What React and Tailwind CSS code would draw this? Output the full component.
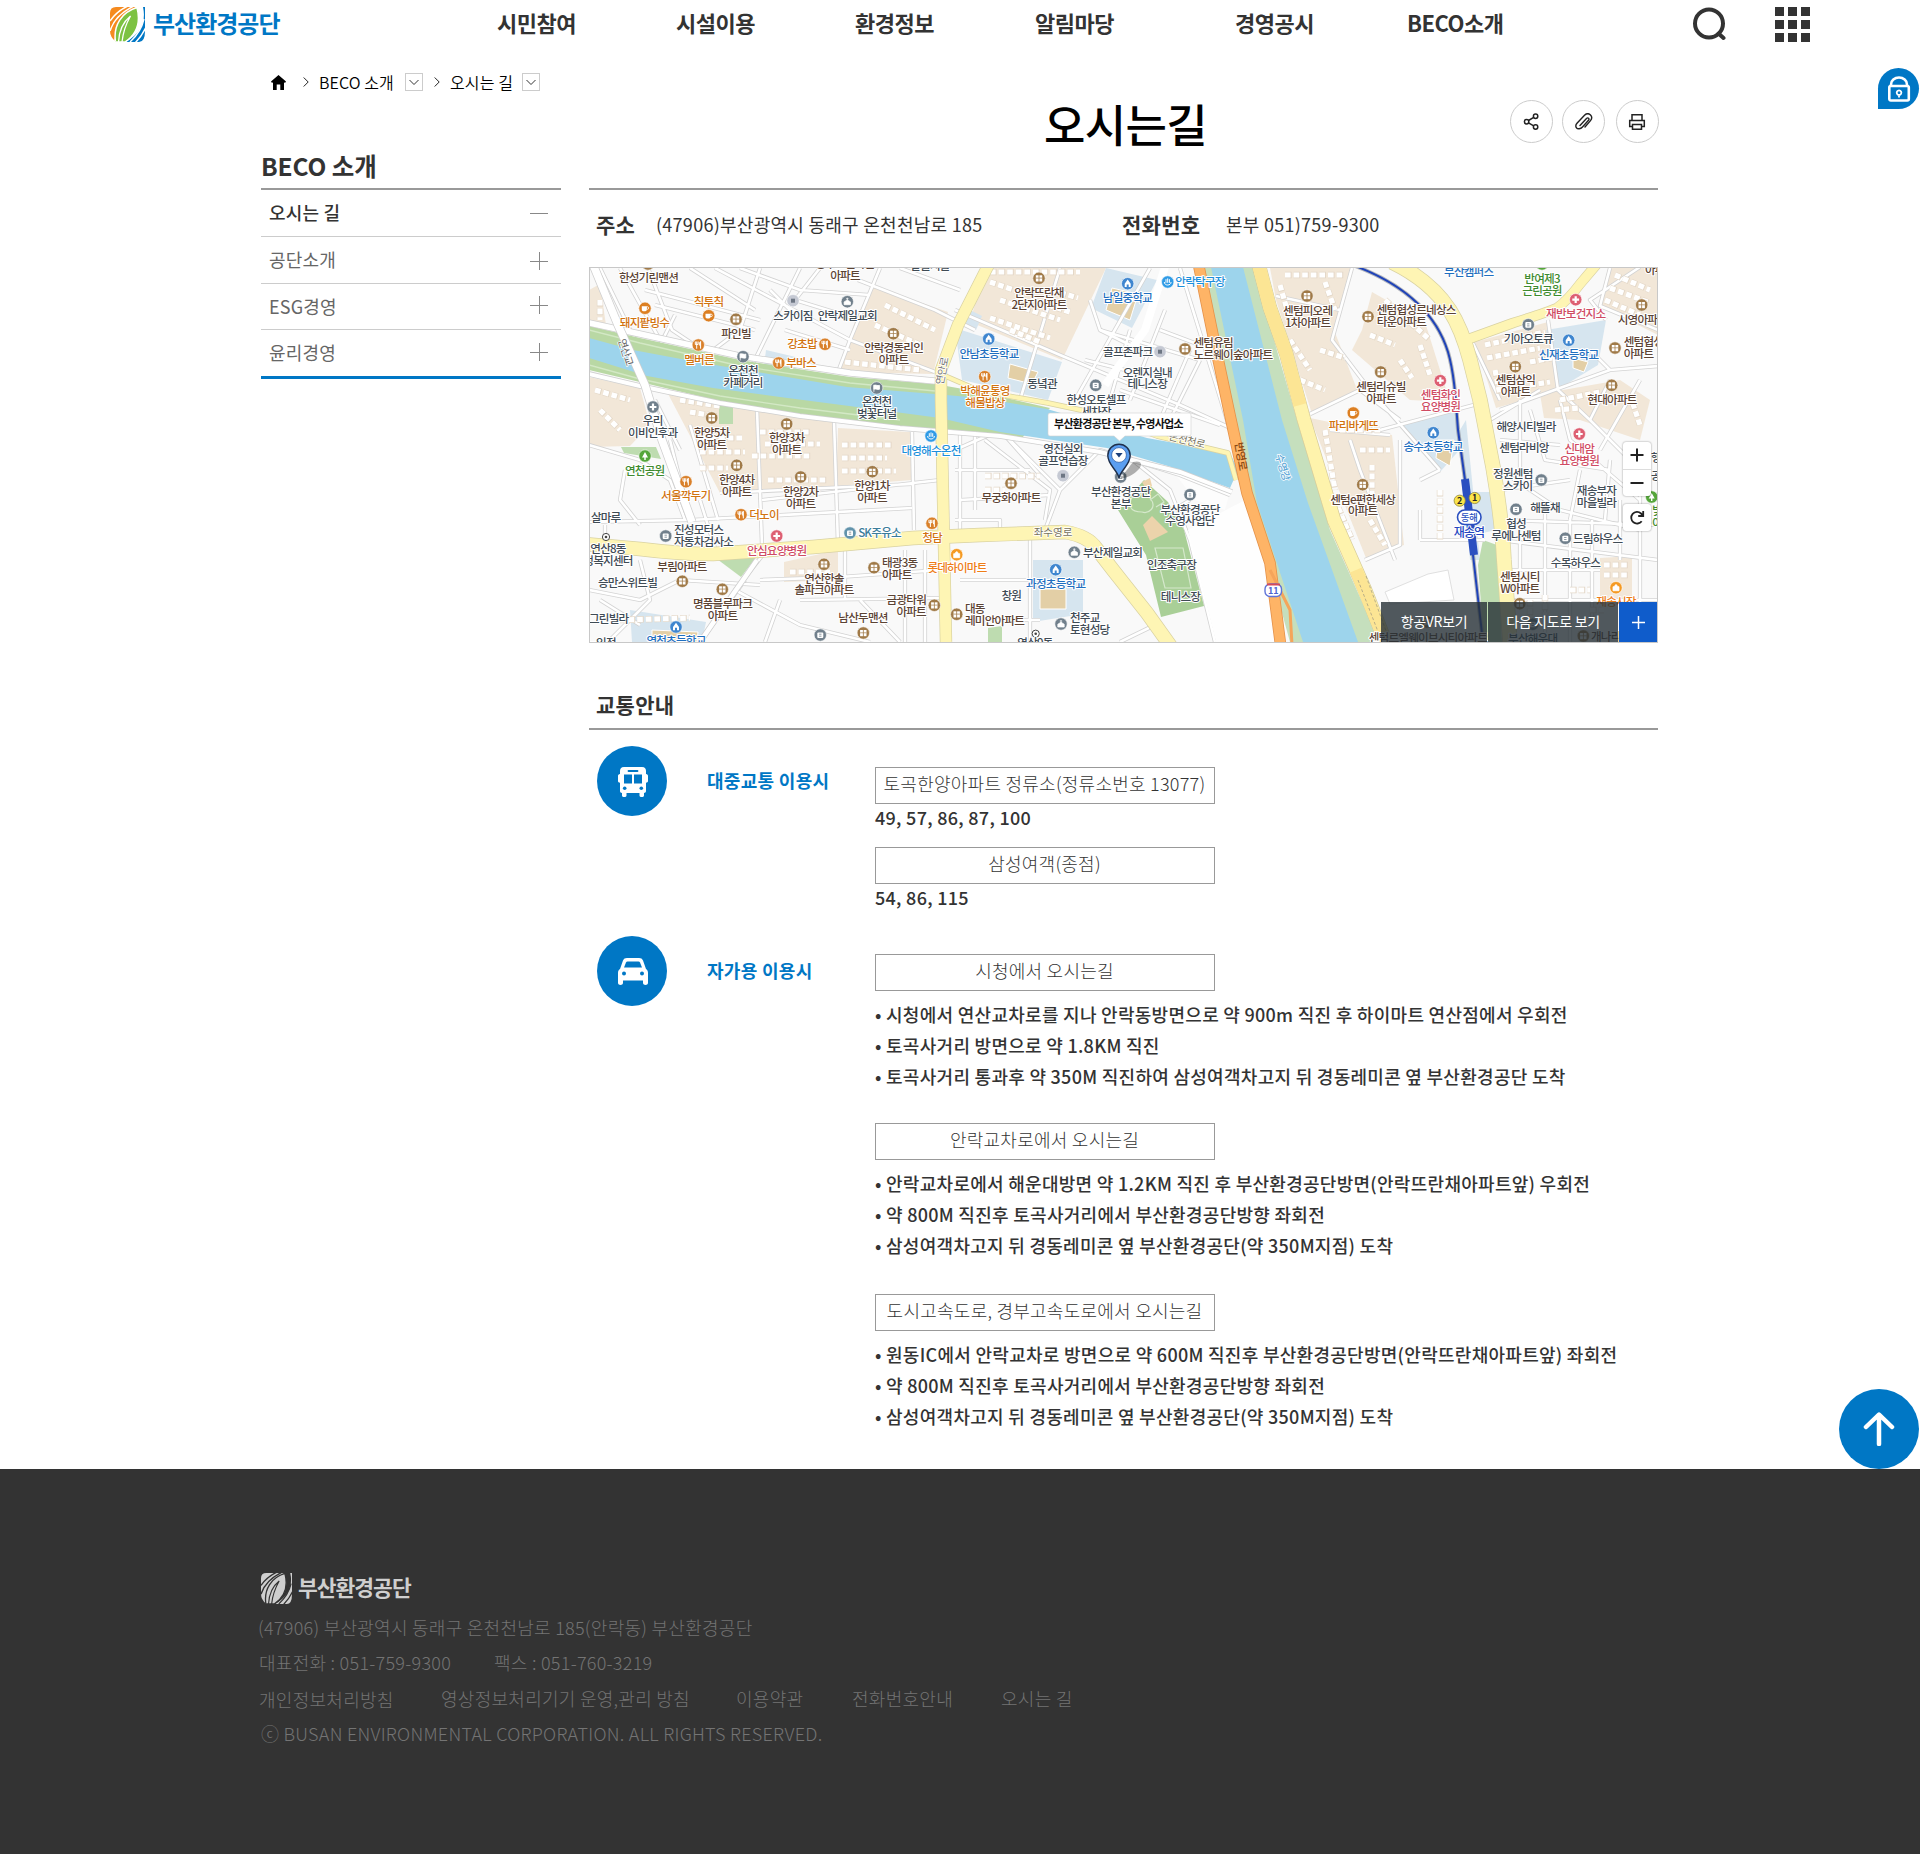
import React from "react";

const BASE = "font-['Noto_Sans_CJK_KR','Noto_Sans',sans-serif]";

/* ---------- map data ---------- */
const C = {
  apt: "#5b4334",
  gray: "#3f4b55",
  food: "#d2730f",
  school: "#1f6fc0",
  sky: "#1c8fdb",
  red: "#cf4b63",
  green: "#3d8a2e",
  teal: "#3c7d9b",
  sale: "#ee7d17",
};
const ICON = {
  apt: "#a07a48",
  gray: "#71808c",
  dot: "#c5c9d3",
  food: "#d9802a",
  cafe: "#dc7f22",
  school: "#3f86cf",
  sky: "#2f9be6",
  red: "#dd5f72",
  green: "#55a63a",
  teal: "#6293ab",
  sale: "#f59a23",
  flag: "#71808c",
  cross: "#71808c",
  church: "#71808c",
};

// [lines, x, y of first line centre, colour, anchor]
const LABELS = [
  [["한성기린맨션"], 648.5, 277.7, C.apt],
  [["돼지팥빙수"], 644.5, 323, C.food],
  [["칙투칙"], 708.5, 301.7, C.food],
  [["파인빌"], 736, 333.5, C.apt],
  [["멜버른"], 699, 360, C.food],
  [["온천천", "카페거리"], 743, 371, C.gray],
  [["강초밥"], 802, 344, C.food],
  [["부바스"], 801, 362.5, C.food],
  [["스카이짐"], 793, 315.3, C.gray],
  [["안락제일교회"], 847.3, 316, C.gray],
  [["동부그린타운", "아파트"], 845, 263.5, C.apt],
  [["알뜰시몰"], 930, 266, C.gray],
  [["안락경동리인", "아파트"], 893.5, 348, C.apt],
  [["온천천", "벚꽃터널"], 876.7, 402, C.gray],
  [["우리", "이비인후과"], 652.7, 421, C.gray],
  [["한양5차", "아파트"], 711.7, 432.7, C.apt],
  [["한양3차", "아파트"], 786.7, 438, C.apt],
  [["대영해수온천"], 931, 450.7, C.sky],
  [["연천공원"], 644.7, 470.3, C.green],
  [["서울깍두기"], 685.7, 496, C.food],
  [["한양4차", "아파트"], 736.7, 480, C.apt],
  [["한양2차", "아파트"], 800.7, 491.5, C.apt],
  [["한양1차", "아파트"], 872, 485.7, C.apt],
  [["더노이"], 764, 514.7, C.food],
  [["살마루"], 605.7, 518, C.gray],
  [["진성모터스", "자동차검사소"], 674, 529.5, C.gray, "start"],
  [["안심요양병원"], 776.7, 550.3, C.red],
  [["SK주유소"], 879.5, 532.7, C.teal],
  [["청담"], 932, 537.3, C.food],
  [["연산8동", "정복지센터"], 608, 548.5, C.gray],
  [["부림아파트"], 682, 567, C.apt],
  [["승만스위트빌"], 627.5, 582.7, C.gray],
  [["명품블루파크", "아파트"], 722.5, 603.7, C.apt],
  [["그린빌라"], 608.7, 618.7, C.gray],
  [["연천초등학교"], 676, 640.7, C.school],
  [["노인정"], 601, 643, C.gray],
  [["연산한솔", "솔파크아파트"], 824, 578.3, C.apt],
  [["태광3동", "아파트"], 882, 562.5, C.apt, "start"],
  [["롯데하이마트"], 957, 568, C.sale],
  [["금광타워", "아파트"], 926, 599.7, C.apt, "end"],
  [["대동", "레미안아파트"], 965, 609, C.apt, "start"],
  [["남산두맨션"], 863, 618, C.apt],
  [["안락뜨란채", "2단지아파트"], 1039, 292.7, C.apt],
  [["남일중학교"], 1127.5, 298, C.school],
  [["안락탁구장"], 1200, 281.7, C.sky],
  [["안남초등학교"], 989, 353.3, C.school],
  [["박해윤통영", "해물밥상"], 985, 390.5, C.food],
  [["골프존파크"], 1127.7, 351.7, C.gray],
  [["센텀유림", "노르웨이숲아파트"], 1193.5, 342.7, C.apt, "start"],
  [["오렌지실내", "테니스장"], 1147.3, 372.3, C.gray],
  [["동녘관"], 1042, 383.7, C.gray],
  [["한성오토셀프", "세차장"], 1096, 400, C.gray],
  [["센텀피오레", "1차아파트"], 1307.7, 310.5, C.apt],
  [["부산캠퍼스"], 1468.7, 272, C.school],
  [["센텀협성르네상스", "타운아파트"], 1376.7, 310, C.apt, "start"],
  [["센텀리슈빌", "아파트"], 1381, 386.5, C.apt],
  [["센텀화인", "요양병원"], 1440.5, 394.7, C.red],
  [["파리바게뜨"], 1353.5, 426, C.food],
  [["송수초등학교"], 1433, 446.7, C.school],
  [["반여제3", "근린공원"], 1542, 278.7, C.green],
  [["재반보건지소"], 1575.7, 314, C.red],
  [["기아오토큐"], 1528.3, 339, C.gray],
  [["신재초등학교"], 1568.7, 355, C.school],
  [["시영아파트"], 1617.7, 319.7, C.apt, "start"],
  [["아파트"], 1645, 270, C.apt, "start"],
  [["센텀협성", "아파트"], 1623.7, 342, C.apt, "start"],
  [["센텀삼익", "아파트"], 1515.5, 379.7, C.apt],
  [["현대아파트"], 1612, 399.3, C.apt],
  [["해양시티빌라"], 1526, 426.3, C.gray],
  [["센텀라비앙"], 1524, 447.7, C.gray],
  [["신대암", "요양병원"], 1579.3, 448.7, C.red],
  [["정원센텀", "스카이"], 1532.5, 473.5, C.gray, "end"],
  [["센텀e편한세상", "아파트"], 1362.7, 499.2, C.apt],
  [["재송부자", "마을빌라"], 1596.5, 491, C.gray],
  [["해뜰채"], 1545, 507.7, C.gray],
  [["협성", "루에나센텀"], 1516, 523.5, C.gray],
  [["드림하우스"], 1597.7, 538.5, C.gray],
  [["수목하우스"], 1575.5, 563, C.gray],
  [["센텀시티", "W아파트"], 1519.8, 577, C.apt],
  [["재송시장"], 1616, 601.5, C.sale],
  [["센텀르엘웨이브시티아파트"], 1368.7, 637.3, C.apt, "start"],
  [["부산해운대"], 1532.7, 638.3, C.gray],
  [["개나리"], 1591, 636.7, C.apt, "start"],
  [["행"], 1651, 457.5, C.gray, "start"],
  [["공"], 1651, 475.5, C.gray, "start"],
  [["빛", "이"], 1652, 511, C.green, "start"],
  [["영진실외", "골프연습장"], 1063, 448.7, C.gray],
  [["무궁화아파트"], 1011, 497.3, C.apt],
  [["부산환경공단", "본부"], 1120.7, 491.7, C.gray],
  [["부산환경공단", "수영사업단"], 1190, 509.3, C.gray],
  [["부산제일교회"], 1083, 552.3, C.gray, "start"],
  [["과정초등학교"], 1055.7, 583.7, C.school],
  [["창원"], 1011.3, 595.7, C.gray],
  [["인조축구장"], 1171.5, 564.3, C.gray],
  [["테니스장"], 1180.5, 596.3, C.gray],
  [["천주교", "토현성당"], 1070, 617.8, C.gray, "start"],
  [["연산9동"], 1035, 643, C.gray],
];

const PINS = [
  ["apt", 648, 264], ["cafe", 645, 308.3], ["cafe", 708.7, 315.7], ["apt", 736, 319.3],
  ["food", 698.3, 345], ["flag", 743, 356.7], ["food", 825, 344.3], ["food", 778.7, 363],
  ["dot", 793, 300.7], ["church", 847.3, 301.7], ["apt", 893.3, 333.7], ["flag", 876.7, 388],
  ["cross", 653, 407], ["apt", 711.7, 418], ["apt", 786.7, 424], ["sky", 931, 436],
  ["green", 645, 456], ["food", 686, 481.7], ["apt", 736.7, 465.3], ["apt", 800.7, 477],
  ["apt", 872.3, 471.7], ["food", 741, 514.7], ["gray", 665.7, 536], ["red", 776.7, 536],
  ["teal", 850, 533], ["food", 932, 523.3], ["apt", 682.3, 581.3], ["apt", 722.3, 589.3],
  ["school", 676, 627], ["apt", 824, 564.3], ["apt", 874, 567.7], ["sale", 956.7, 554.7],
  ["apt", 934.3, 605.3], ["apt", 956.7, 614.3], ["apt", 863.3, 633], ["gray", 820.3, 635],
  ["apt", 1039, 278.3], ["school", 1127.7, 283.7], ["sky", 1167.7, 282], ["school", 988.7, 339],
  ["food", 984.7, 376.7], ["dot", 1160, 351.7], ["apt", 1185, 349], ["gray", 1095.7, 385.3],
  ["apt", 1307, 296], ["apt", 1368, 316.7], ["apt", 1380.7, 372], ["red", 1440.3, 380.7],
  ["cafe", 1353.3, 413], ["school", 1433.3, 432.7], ["green", 1542, 264], ["red", 1575.7, 299.7],
  ["gray", 1528.3, 324.7], ["school", 1568.7, 340.3], ["apt", 1641.7, 305], ["apt", 1615, 348],
  ["apt", 1515.3, 366.7], ["apt", 1611.7, 385.3], ["red", 1579.3, 434], ["gray", 1541.3, 480],
  ["apt", 1362.7, 484.7], ["gray", 1516, 509.3], ["gray", 1565.3, 538.3], ["apt", 1519.7, 603.7],
  ["sale", 1616, 587.7], ["gray", 1532.7, 624.3], ["apt", 1583.3, 636], ["green", 1651.7, 497],
  ["apt", 1427, 622], ["dot", 1063, 475.7], ["apt", 1011, 483.3], ["gray", 1120.7, 477],
  ["gray", 1190, 494.7], ["church", 1074.3, 552.3], ["school", 1055.7, 569.7], ["church", 1061, 624],
];

const BEIGE = [
  "M589 377 640 388 650 425 630 446 589 447Z",
  "M589 290 600 284 606 325 589 330Z",
  "M666 390 700 396 785 410 834 420 836 488 720 493 Z",
  "M838 428 910 432 912 480 836 486Z",
  "M873 286 948 312 933 374 838 372 856 318Z",
  "M985 268 1106 268 1062 360 970 322Z",
  "M1270 268 1352 268 1334 330 1358 392 1312 414 1276 300Z",
  "M1372 292 1425 322 1450 402 1410 400 1352 350 1362 330Z",
  "M1475 342 1548 322 1560 390 1496 408Z",
  "M1608 268 1658 268 1658 335 1600 306Z",
  "M1310 418 1392 435 1404 545 1366 558Z",
  "M1540 394 1620 380 1650 400 1640 440 1580 420 1544 418Z",
  "M1600 558 1632 556 1632 600 1600 600Z",
  "M784 562 838 550 838 580 784 582Z",
];
const SCHOOL = [
  "M1106 268 1157 280 1132 328 1091 308Z",
  "M955 328 1062 362 1048 400 962 380Z",
  "M1400 424 1457 410 1463 446 1440 472Z",
  "M1546 330 1606 320 1598 365 1560 388Z",
  "M630 610 706 622 702 642 632 642Z",
  "M1033 560 1083 560 1083 614 1033 622Z",
  "M766 350 800 358 796 370 764 366Z",
  "M970 310 982 316 976 330 962 326Z",
  "M1474 492 1494 492 1496 530 1474 535Z",
  "M1466 420 1472 480 1480 560 1470 560 1460 430Z",
];
const GREEN = [
  "M621 447 656 447 661 459 624 453Z",
  "M713 556 757 556 741 577Z",
  "M1483 540 1497 545 1502 642 1484 642 1478 565Z",
  "M988 628 1002 626 1002 642 988 642Z",
  "M719 405 733 405 733 424 719 424Z",
];
const SANDS = [
  "M1112 288 1138 294 1130 320 1106 310Z",
  "M1010 364 1038 372 1032 384 1008 378Z",
  "M1438 440 1454 440 1450 466 1436 458Z",
  "M1573 358 1588 362 1584 372 1573 368Z",
  "M652 630 698 632 697 642 652 640Z",
  "M1040 589 1066 589 1066 609 1040 609Z",
];
// rows of small buildings
const ROWS = [
  "M702 438h40M700 452h45M700 468h28M760 432h50M765 444h55M768 480h60M842 445h50M842 458h45M842 471h54M752 456h60",
  "M885 305 935 330M868 345h18M845 362 920 370M875 325 920 345M680 400 720 406M690 412 715 416",
  "M990 272h90M990 282 1020 292M1000 300 1060 320M990 318 1050 338M1010 330 1040 342M1052 290 1078 298M1048 305 1070 312",
  "M1285 275h60M1280 285 1290 320M1325 282 1335 310M1290 340 1310 370M1320 350 1345 358M1300 380 1325 390",
  "M1385 300 1430 340M1370 335 1395 345M1420 345 1430 375M1400 360 1412 378",
  "M1485 345 1545 332M1487 358 1540 348M1495 370 1500 395M1530 362 1552 358M1530 385 1550 382",
  "M1615 275 1650 290M1610 288 1650 303M1605 300 1640 315M1560 400 1600 392M1555 410 1580 408M1630 395 1640 425",
  "M1325 430 1335 490M1340 430h40M1360 450h30M1372 465v45M1335 500 1352 540M1370 520 1385 545",
  "M600 300v20M595 390 630 400M600 410 620 430M985 476h55M985 490h20M790 572h40M1604 565h24M1604 575h24",
  "M1530 600v20M1545 595v20M1570 590h20M1590 610h14M1440 490v50M620 620 690 618",
];
// narrow streets
const STREETS = [
  "M620 268 660 340M648 268 672 330 705 352M645 290 760 320M655 305 755 330M690 268 755 310M760 268 740 330 700 360",
  "M715 268 850 340 935 372M800 268 745 380M880 268 850 340 838 372M858 280 935 310 975 330M770 290 800 320M785 330 850 350",
  "M820 268 795 300 860 320M900 268 960 290M740 268 800 290 870 295M675 315 660 345M600 268 640 350",
  "M589 445 640 460 670 480 685 520M670 440 690 520M690 425 718 520M655 400 680 450M757 410 762 545M834 420 838 545M912 432 914 530",
  "M589 522 690 520 912 508M762 500 940 480M720 493 912 484M625 470 620 500 640 525M605 525v20M700 500 715 548",
  "M589 590 640 600 680 580 760 585M745 580 700 642M762 556 735 590 800 625 870 642M760 580 840 577 940 570M845 545V600M800 600 940 598",
  "M640 560 650 600 610 640M600 600 640 625M780 600 765 642M905 550V642M925 550V642M860 600 900 642M960 580h70M980 620h60M1030 540V642",
  "M955 310 1060 355 1180 405 1235 430M1060 268 1020 400M1140 350 1100 330 1090 300M1150 268 1075 400M1180 268 1230 430M1160 330 1200 345M1130 330 1110 400",
  "M1165 310 1130 400M1190 350 1160 420M1085 360 1125 370M1120 390 1220 425M1200 360 1170 420M1100 330 1200 360",
  "M955 450 1000 430 1060 490 1100 450 1180 475 1230 495M985 440 1050 490 1045 520M960 500 1050 495M1060 490 1045 530M1120 450 1170 490 1190 540 1215 642M955 520H1000V535M955 470H1030",
  "M960 420V530M975 430V510M1000 430 1040 475M1155 625 1120 642M1140 530 1190 500",
  "M1352 268 1332 340 1370 390 1440 470M1310 414 1360 390 1400 420M1276 296 1340 310M1380 430 1485 402M1350 440 1360 470 1395 560M1365 560 1400 545V440M1390 435 1330 430",
  "M1500 410 1560 388 1610 370 1658 366M1490 420 1540 390M1470 337 1500 400M1548 320 1558 390 1590 420 1640 470M1606 320 1590 300 1640 267M1610 370 1590 350M1658 330 1600 306 1610 268",
  "M1520 400V470M1530 410 1545 460 1610 470M1500 440 1560 445M1560 400 1570 440 1640 500M1500 470 1560 510 1640 530M1590 420 1610 380M1640 380 1600 450",
  "M1545 510V642M1500 520 1658 525M1500 540 1658 560M1500 570H1600M1570 520V642M1592 520V620M1620 500V560M1640 480V640M1505 600 1658 600M1520 540V570",
  "M1420 540h65M1420 510v30M1440 470 1420 480M1500 490 1570 480M1580 470 1570 520M1610 460 1605 520",
];
const YELLOW = [
  ["M990 262 958 325 941 370 941 400 946 642", 11],
  ["M585 544 640 549Q680 554 713 554L813 547 913 538 980 535 1065 532Q1088 536 1096 548L1113 570 1147 613 1172 648", 13],
  ["M1392 262C1450 290 1462 330 1470 360L1480 400 1493 467Q1502 520 1504 560L1510 642", 14],
  ["M1466 340 1513 323Q1548 312 1557 308 1568 300 1580 284L1597 264", 9],
  ["M943 375 980 391 1048 403 1090 412 1157 436 1228 453 1236 480", 4],
];

function PinGlyph({ kind }) {
  switch (kind) {
    case "apt":
      return (
        <g fill="#fff">
          <rect x="-3.2" y="-3" width="2.8" height="6.2" />
          <rect x="0.4" y="-3" width="2.8" height="6.2" />
          <path d="M-3.2 -.2h6.4" stroke="#a07a48" strokeWidth=".7" />
        </g>
      );
    case "food":
      return (
        <g stroke="#fff" strokeWidth="1" fill="none">
          <path d="M-3 -3.5v3M-1.6 -3.5v7.2M-.2 -3.5v3M-3 -.6h2.8" />
          <path d="M2.3 3.7v-7.2c-1.2.8-1.4 3-.6 4.2" fill="#fff" />
        </g>
      );
    case "cafe":
      return (
        <g>
          <path d="M-3.2 -2h5v3.4c0 2-5 2-5 0z" fill="#fff" />
          <circle cx="2.3" cy="-.3" r="1.3" fill="none" stroke="#fff" strokeWidth=".8" />
        </g>
      );
    case "school":
      return <path d="M0 -4.2 3 0v3.2H1V.8h-2v2.4h-2V0z" fill="#fff" />;
    case "red":
    case "cross":
      return <path d="M0 -3.4V3.4M-3.4 0H3.4" stroke="#fff" strokeWidth="2.2" />;
    case "green":
      return <path d="M0 -4 3 1.6H.7V4H-.7V1.6H-3z" fill="#fff" />;
    case "flag":
      return <path d="M-2.8 -3.2v7M-2.8 -2.6c2-1 3.4.8 5.6 0V1.2c-2.2.8-3.6-.8-5.6 0z" fill="#fff" stroke="#fff" strokeWidth=".8" />;
    case "church":
      return <path d="M0 -4v3M-1.2 -3h2.4M-3.2 3V.2L0 -1.8 3.2 .2V3z" fill="#fff" stroke="#fff" strokeWidth=".7" />;
    case "sky":
      return <path d="M-3.4 0c0 4 6.8 4 6.8 0M-1.7 .8v-3.6M0 .8v-4.4M1.7 .8v-3.6" fill="none" stroke="#fff" strokeWidth="1" />;
    case "sale":
      return <path d="M-3 -1h6v4h-6zM-1.4 -1c0-2.6 2.8-2.6 2.8 0" fill="#fff" stroke="#fff" strokeWidth=".8" />;
    case "dot":
      return <rect x="-2" y="-2" width="4" height="4" fill="#6d7683" />;
    default:
      return (
        <g>
          <rect x="-3" y="-2.6" width="6" height="5.6" rx="1" fill="#fff" />
          <path d="M-1.2 -.8h2.4M-1.2 1.2h2.4" stroke="#71808c" strokeWidth=".8" />
        </g>
      );
  }
}

const RAIL = "M1350 264C1400 282 1435 310 1448 352 1455 376 1456 405 1458 430L1465 480 1473 555 1483 642";
const EXPRESSWAY = "M1198 262 1214 340 1231 420 1247 493 1270 563 1281 648";
const RIVERSIDE = "M1258 262 1270 308 1286 353 1304 420 1334 520 1365 590 1388 648";
const NORTH_BANK = "M585 322 640 334 740 356 850 373 935 381";
const SOUTH_BANK = "M585 373 640 386 720 403 800 416 900 428 1000 436 1100 452 1180 472 1232 492";
const WEST_ROAD = "M592 262 618 325 645 385 662 440 692 522";

function MapArt() {
  return (
    <svg className="block h-[374px] w-[1067px]" viewBox="590 268 1067 374">
      <rect x="589" y="267" width="1069" height="375" fill="#f9f9f9" />
      {BEIGE.map((d) => <path key={d} d={d} fill="#f2e7d8" />)}
      {SCHOOL.map((d) => <path key={d} d={d} fill="#d6e5ef" />)}
      {GREEN.map((d) => <path key={d} d={d} fill="#bedcb0" />)}
      {SANDS.map((d) => <path key={d} d={d} fill="#e3cfa6" stroke="#fff" strokeWidth="1" />)}
      <path d="M1158 452 1230 492 1225 510 1195 500z" fill="#fff" opacity=".6" />
      {/* streets */}
      <g fill="none" strokeLinejoin="round">
        {STREETS.map((d) => <path key={d} d={d} stroke="#d3d3d3" strokeWidth="4.2" />)}
        {STREETS.map((d) => <path key={d} d={d} stroke="#fff" strokeWidth="2.6" />)}
      </g>
      <g fill="none">
        {ROWS.map((d) => <path key={d} d={d} stroke="#e4d8c8" strokeWidth="6.4" strokeDasharray="6.6 2" />)}
        {ROWS.map((d) => <path key={d} d={d} stroke="#fff" strokeWidth="5.2" strokeDasharray="5.6 3" />)}
      </g>
      {/* large blocks without streets */}
      <path d="M1188 530 1245 500 1272 590 1276 642 1216 642Z" fill="#fefefe" />
      <path d="M1385 592 1428 574 1448 570 1454 600 1390 604Z" fill="#fff" stroke="#e0e0e0" />
      {/* sports park */}
      <path d="M1118 510 1144 480 1168 502 1184 530 1204 606 1161 617 1146 555Z" fill="#a9cf97" />
      <path d="M1130 504c0-12 16-12 20-6 8 10-2 16-8 14-6 0-12-2-12-8zM1155 548h28l8 40h-26zM1157 566l28-3M1150 500l8-6 6 8-8 5" fill="none" stroke="#d5e8cb" strokeWidth="1.2" />
      <path d="M1143 525 1152 516 1168 532 1150 541zM1142 482 1150 478 1152 486 1146 489z" fill="#ecd3ab" />
      {/* small stream */}
      <path d="M589 326 640 338 740 360 850 377 935 384 980 392 1050 408 1020 440 980 432 900 426 800 414 720 401 640 382 589 370Z" fill="#b9d8a4" />
      <path d="M589 330 640 343 740 366 850 383 935 391M589 365 640 379 720 396 800 408 900 420" fill="none" stroke="#d3e8c5" strokeWidth="1.3" />
      <path d="M589 338 633 350 697 362 763 373 847 387 935 394 980 398 1047 409 1147 438 1230 453 1238 470 1230 488 1168 466 1107 448 1000 432 940 418 880 410 780 397 713 388 647 376 589 358Z" fill="#9dd4ec" />
      {/* wide river */}
      <path d="M1204 267 1253 267 1297 420 1330 530 1380 642 1290 642 1262 540 1240 440Z" fill="#c5dfbd" />
      <path d="M1211 267 1243 267 1282 420 1308 503 1358 642 1303 642 1257 503 1243 420Z" fill="#9dd4ec" />
      {/* bank roads */}
      <g fill="none">
        <path d={NORTH_BANK} stroke="#cfcfcf" strokeWidth="7" />
        <path d={NORTH_BANK} stroke="#fff" strokeWidth="5.5" />
        <path d={SOUTH_BANK} stroke="#cfcfcf" strokeWidth="5.5" />
        <path d={SOUTH_BANK} stroke="#fff" strokeWidth="4" />
        <path d={WEST_ROAD} stroke="#cfcfcf" strokeWidth="9" />
        <path d={WEST_ROAD} stroke="#fff" strokeWidth="7.5" />
        <path d="M1165 267 1145 330 1105 385" stroke="#fff" strokeWidth="8" />
        <path d="M757 560 722 610 700 642" stroke="#cfcfcf" strokeWidth="6" />
        <path d="M757 560 722 610 700 642" stroke="#fff" strokeWidth="4.5" />
      </g>
      {/* main roads */}
      <g fill="none" strokeLinejoin="round">
        {YELLOW.map(([d, w]) => <path key={d} d={d} stroke="#d9d2a2" strokeWidth={w + 1.4} />)}
        {YELLOW.map(([d, w]) => <path key={d} d={d} stroke="#fef5b4" strokeWidth={w} />)}
        <path d={RIVERSIDE} stroke="#d6cb98" strokeWidth="14.4" />
        <path d={RIVERSIDE} stroke="#fef3ac" strokeWidth="13" />
        <path d="M1258 262 1270 308 1286 353 1300 405M1356 570 1388 648" stroke="#fce594" strokeWidth="13" />
        <path d="M1358 580 1382 642M1366 576 1390 642" stroke="#a9a184" strokeWidth=".8" strokeDasharray="3 2" />
        <path d={EXPRESSWAY} stroke="#e5924a" strokeWidth="11.6" />
        <path d={EXPRESSWAY} stroke="#feb466" strokeWidth="10" />
        <path d="M1270 570 1290 610 1292 645" stroke="#f5a55a" strokeWidth="3" />
        {/* railway */}
        <path d={RAIL} stroke="#6f7480" strokeWidth="4" opacity=".5" />
        <path d={RAIL} stroke="#1f43b8" strokeWidth="2" />
        <path d="M1465 479 1474 555" stroke="#2a4fc0" strokeWidth="8" />
      </g>
      {/* places */}
      {PINS.map(([kind, x, y]) => (
        <g key={`${x}-${y}`} transform={`translate(${x} ${y})`}>
          <circle r="6.2" fill={ICON[kind]} stroke="#fff" strokeWidth=".6" />
          <PinGlyph kind={kind} />
        </g>
      ))}
      {[[606, 537], [1035.7, 633.7]].map(([x, y]) => (
        <g key={x}>
          <circle cx={x} cy={y} r="3.6" fill="#fff" stroke="#444" />
          <circle cx={x} cy={y} r="1.3" fill="#444" />
        </g>
      ))}
      <g fontSize="11.6" fontWeight="500" letterSpacing="-.8" strokeLinejoin="round" className={BASE}>
        {LABELS.map(([lines, x, y, color, anchor]) =>
          lines.map((t, i) => (
            <text key={`${t}${x}${i}`} x={x} y={y + 4.3 + i * 11.7} fill={color} stroke="#fff" strokeWidth="2" paintOrder="stroke" textAnchor={anchor || "middle"}>
              {t}
            </text>
          ))
        )}
        <g fontSize="10.5" fontWeight="400" textAnchor="middle" letterSpacing="-.5" stroke="#fff" strokeWidth="1.5" paintOrder="stroke">
          <text transform="translate(626 352) rotate(72)" y="4" fill="#666">연산교</text>
          <text transform="translate(942 371) rotate(-78)" y="4" fill="#777">연안로</text>
          <text x="1053" y="536" fill="#77725c" letterSpacing="0">좌수영로</text>
          <text transform="translate(1187 440) rotate(14)" y="4" fill="#77725c">온천천로</text>
        </g>
        <text transform="translate(1241 456) rotate(80)" y="4" fontSize="11" fill="#8a4a12" textAnchor="middle" letterSpacing="-.8">번영로</text>
        <text transform="translate(1283 467) rotate(72)" y="4" fontSize="10.5" fill="#5aa6d6" textAnchor="middle" stroke="#fff" strokeWidth="1.5" paintOrder="stroke" letterSpacing="-.5">수영강</text>
        <text x="1469" y="537" fontSize="12" fill="#2446c0" stroke="#fff" strokeWidth="2" paintOrder="stroke" textAnchor="middle">재송역</text>
        <rect x="1457.5" y="510" width="23.5" height="14.5" rx="7.2" fill="#fff" stroke="#2a4fc0" strokeWidth="1.6" />
        <text x="1469" y="521" fontSize="9.5" fontWeight="500" fill="#2a4fc0" textAnchor="middle" letterSpacing="-.5">동해</text>
        {[["1", 1474.7, 498], ["2", 1459.7, 500.7]].map(([n, x, y]) => (
          <g key={n}>
            <circle cx={x} cy={y} r="5.6" fill="#fbe44a" stroke="#8d8540" strokeWidth=".8" />
            <text x={x} y={y + 3.4} fontSize="9" fontWeight="700" fill="#222" textAnchor="middle" letterSpacing="0">{n}</text>
          </g>
        ))}
        <rect x="1265" y="584" width="16.5" height="12.5" rx="5" fill="#fff" stroke="#5f74d8" strokeWidth="1.4" />
        <path d="M1267 584.5h13" stroke="#d54a5a" strokeWidth="2" />
        <text x="1273.3" y="594" fontSize="9" fontWeight="700" fill="#4d63d0" textAnchor="middle" letterSpacing="0">11</text>
      </g>
      {/* marker */}
      <path d="M1120 479 1133 462c8-2 10 2 6 7-5 6-13 9-19 10z" fill="#000" opacity=".3" />
      <path d="M1119 478c-1.5-8-11.2-13-11.2-22.5a11.2 11.2 0 0 1 22.4 0c0 9.5-9.7 14.5-11.2 22.5z" fill="#5b9ef0" stroke="#1f2f4a" strokeWidth="1.4" />
      <circle cx="1119" cy="455" r="7.4" fill="#fff" stroke="#2b5ea8" strokeWidth=".8" />
      <path d="M1115.4 453h7.2l-3.6 4.6z" fill="#1b3f7a" />
      {/* tooltip */}
      <path d="M1050 413h139a2 2 0 0 1 2 2v19a2 2 0 0 1-2 2h-64l-5.5 5-5.5-5h-64a2 2 0 0 1-2-2v-19a2 2 0 0 1 2-2z" fill="#fff" stroke="#d0d0d0" strokeWidth=".6" />
      <text x="1118.5" y="428" fontSize="11" fontWeight="700" fill="#111" textAnchor="middle" letterSpacing="-.7" className={BASE}>부산환경공단 본부, 수영사업소</text>
    </svg>
  );
}

function MapPanel() {
  return (
    <div className="relative h-[376px] w-[1069px] overflow-hidden border border-[#c8c8c8]">
      <MapArt />
      <div className="absolute top-[174px] right-[6px] flex w-[28px] flex-col gap-2">
        <div className="flex h-[54px] flex-col rounded-[3px] bg-white shadow-[0_0_2px_rgba(0,0,0,0.45)]">
          <div className="flex flex-1 items-center justify-center border-b border-[#ddd]">
            <svg className="size-[14px]" viewBox="0 0 14 14"><path d="M7 .5v13M.5 7h13" stroke="#222" strokeWidth="2" /></svg>
          </div>
          <div className="flex flex-1 items-center justify-center">
            <svg className="size-[14px]" viewBox="0 0 14 14"><path d="M.5 7h13" stroke="#222" strokeWidth="2" /></svg>
          </div>
        </div>
        <div className="flex h-[27px] items-center justify-center rounded-[3px] bg-white shadow-[0_0_2px_rgba(0,0,0,0.45)]">
          <svg className="size-[16px]" viewBox="0 0 16 16" fill="none" stroke="#222" strokeWidth="1.8"><path d="M12.7 11.2A5.8 5.8 0 1 1 12 3.5L14 5.8M14.2 1v5h-5" /></svg>
        </div>
      </div>
      <div className="absolute right-0 bottom-0 flex h-[40px] gap-px text-[14px] leading-[38px] tracking-[-0.3px] text-white">
        <div className="w-[106px] bg-[#263036]/80 text-center">항공VR보기</div>
        <div className="w-[130px] bg-[#263036]/80 text-center">다음 지도로 보기</div>
        <div className="flex w-[38px] items-center justify-center bg-[#0f5ccb]">
          <svg className="size-[13px]" viewBox="0 0 13 13"><path d="M6.5 0v13M0 6.5h13" stroke="#fff" strokeWidth="1.5" /></svg>
        </div>
      </div>
    </div>
  );
}

/* ---------- page parts ---------- */
function LeafMark({ className, mono }) {
  const o = mono ? "#cfcfcf" : "#f58a1f";
  const g = mono ? "#cfcfcf" : "#7dc242";
  const b = mono ? "#cfcfcf" : "#0077c5";
  const gap = mono ? "#333" : "#fff";
  const id = mono ? "leaf-mono" : "leaf-color";
  return (
    <svg className={className} viewBox="0 0 35 35">
      <clipPath id={id}><path d="M6 0H35V24Q35 35 29 35H6Q0 30 0 24V6Q0 0 6 0Z" /></clipPath>
      <g clipPath={`url(#${id})`}>
        <path d="M0 0H26Q8 10 4 35H0Z" fill={o} />
        <path d="M33 0Q38 22 16 35H35V0Z" fill={b} />
        <path d="M0 14Q7 4 18 -1M0 24Q5 8 24 -1" stroke={gap} strokeWidth="1.5" fill="none" />
        <path d="M27 .5C12 5 3 18 5.5 35H15C27 27 31 16 27 .5Z" fill={g} stroke={gap} strokeWidth="1.5" />
        <path d="M8.5 35C9 25 13 15 20.5 9 16 17 13 25 12 35" fill="none" stroke={gap} strokeWidth="1.3" />
        <path d="M34 12Q31 25 20 35M36 20Q32 29 25 36" stroke={gap} strokeWidth="1.4" fill="none" />
      </g>
    </svg>
  );
}

const NAV = [
  ["시민참여", "w-[179px]"],
  ["시설이용", "w-[179px]"],
  ["환경정보", "w-[180px]"],
  ["알림마당", "w-[200px]"],
  ["경영공시", "w-[172px]"],
  ["BECO소개", "w-[285px]"],
];

function Header() {
  return (
    <header className="flex h-[48px] items-center pl-[110px]">
      <div className="flex w-[387px] items-center gap-[8px]">
        <LeafMark className="size-[35px]" />
        <span className="-mt-[2px] text-[24px] leading-[34px] font-bold tracking-[-1px] text-[#0077c5]">부산환경공단</span>
      </div>
      <nav className="-mt-[4px] flex text-[22px] leading-[32px] font-bold tracking-[-0.5px] text-[#333]">
        {NAV.map(([t, w]) => <span key={t} className={w}>{t}</span>)}
      </nav>
      <svg className="mr-[49px] size-[34px]" viewBox="0 0 34 34" fill="none" stroke="#333">
        <circle cx="17" cy="16.5" r="14" strokeWidth="4" />
        <path d="M26.5 26.5 31.5 31" strokeWidth="4" strokeLinecap="round" />
      </svg>
      <div className="grid grid-cols-3 gap-[4px]">
        {Array.from({ length: 9 }, (_, i) => <i key={i} className="size-[9px] bg-[#333]" />)}
      </div>
    </header>
  );
}

function DropBox() {
  return (
    <span className="flex size-[18px] items-center justify-center border border-[#ccc]">
      <svg className="size-[10px]" viewBox="0 0 10 10" fill="none" stroke="#333"><path d="M.5 3 5 7.5 9.5 3" /></svg>
    </span>
  );
}

function Chevron() {
  return <svg className="h-[10px] w-[6px]" viewBox="0 0 6 10" fill="none" stroke="#222"><path d="M.7 .5 5.2 5 .7 9.5" /></svg>;
}

const SIDE = [
  ["오시는 길", "h-[47px] pb-[2px] font-medium text-[#333] border-b border-[#ccc]", "M0 10.5h18"],
  ["공단소개", "h-[47px] pb-[3px] text-[#666] border-b border-[#ccc]", "M0 11.5h18M9.500 2v18"],
  ["ESG경영", "h-[46px] pb-[2px] text-[#666] border-b border-[#ccc]", "M0 8.5h18M9.500 -1v18"],
  ["윤리경영", "h-[49px] pb-[2px] text-[#666] border-b-[3px] border-[#0077c5]", "M0 9.5h18M9.500 0v18"],
];

function Sidebar() {
  return (
    <aside className="w-[300px]">
      <div className="mt-[24px] flex h-[20px] items-center pl-[10px] text-[16px] leading-[20px] font-[350] tracking-[0.1px] text-black">
        <svg className="h-[15px] w-[15px]" viewBox="0 0 15 15"><path d="M7.5 0 15 6.5 14 8 13 7.3V15H9.3V9.5H5.7V15H2V7.3L1 8 0 6.5Z" fill="#000" /></svg>
        <span className="ml-[17px]"><Chevron /></span>
        <span className="ml-[10px] w-[76px] whitespace-nowrap">BECO 소개</span>
        <span className="ml-[10px]"><DropBox /></span>
        <span className="ml-[11px]"><Chevron /></span>
        <span className="ml-[10px] w-[63px] whitespace-nowrap">오시는 길</span>
        <span className="ml-[9px]"><DropBox /></span>
      </div>
      <h2 className="mt-[54px] h-[44px] border-b-2 border-[#999] pt-[2px] text-[24.5px] leading-[36px] font-bold tracking-[-0.1px] text-[#333]">BECO 소개</h2>
      <ul>
        {SIDE.map(([t, cls, d]) => (
          <li key={t} className={`flex items-center justify-between pr-[13px] pl-[8px] text-[18px] leading-[26px] tracking-[0.2px] ${cls}`}>
            {t}
            <svg className="size-[18px] overflow-visible" viewBox="0 0 18 18" stroke="#888"><path d={d} /></svg>
          </li>
        ))}
      </ul>
    </aside>
  );
}

function RoundButton({ children }) {
  return <span className="flex size-[43px] items-center justify-center rounded-full border border-[#ccc]">{children}</span>;
}

function TitleBar() {
  return (
    <div className="relative flex h-[142px] justify-center border-b-2 border-[#999] pt-[44px]">
      <h1 className="ml-[4px] h-[64px] text-[45px] leading-[64px] font-medium tracking-[-0.6px] text-black">오시는길</h1>
      <div className="absolute top-[52px] -right-px flex">
        <RoundButton>
          <svg className="size-[17px]" viewBox="0 0 17 17" fill="none" stroke="#222" strokeWidth="1.5"><circle cx="3.6" cy="8.7" r="2.2" /><circle cx="12.6" cy="3.3" r="2.2" /><circle cx="12.6" cy="14" r="2.2" /><path d="m5.5 7.5 5.2-3.1M5.5 9.8l5.2 3.1" /></svg>
        </RoundButton>
        <span className="w-[9px]" />
        <RoundButton>
          <svg className="size-[18px]" viewBox="0 0 18 18" fill="none" stroke="#222" strokeWidth="1.4" strokeLinecap="round"><path d="M5 12.5 11.5 5.5c1.5-1.5 3.3.3 2 1.8L7.5 14c-2 2.2-5 2.3-6 .8-1-1.3-.8-3 .5-4.5l7.5-8c2-2 4.5-1.8 6-.4 1.5 1.6 1.5 4-.2 6L10 14" /></svg>
        </RoundButton>
        <span className="w-[11px]" />
        <RoundButton>
          <svg className="mr-px size-[18px]" viewBox="0 0 18 18" fill="none" stroke="#222" strokeWidth="1.5"><path d="M4 7V1.7h10V7M4 13.5H1.7V7.5h14.6v6H14M4.5 11.5h9v4.7h-9z" /></svg>
        </RoundButton>
      </div>
    </div>
  );
}

function Stop({ children, className = "" }) {
  return <div className={`flex h-[37px] w-[340px] justify-center border border-[#999] pr-px text-[18px] leading-[30px] font-light tracking-[0.25px] whitespace-nowrap text-[#333] ${className}`}>{children}</div>;
}

function Bullets({ items }) {
  return (
    <ul className="pt-[8px] pb-px text-[18px] leading-[31px] font-medium tracking-[0.28px] whitespace-nowrap text-[#333]">
      {items.map((t) => <li key={t}>• {t}</li>)}
    </ul>
  );
}

function ModeRow({ icon, label, className, children }) {
  return (
    <div className={`flex ${className}`}>
      <span className="ml-[8px] flex size-[70px] items-center justify-center rounded-full bg-[#0077c5]">{icon}</span>
      <span className="mt-[20px] ml-[40px] w-[168px] text-[18px] leading-[28px] font-bold tracking-[0.29px] whitespace-nowrap text-[#0077c5]">{label}</span>
      <div>{children}</div>
    </div>
  );
}

const BusIcon = (
  <svg className="mt-px ml-[2px] h-[30px] w-[30px]" viewBox="0 0 30 30">
    <path d="M6 0h18c3 0 4 2 4 4v3c1.5 0 2 1 2 2v5c0 1-.8 1.7-2 1.7V24c0 1-.8 2-2 2v2.5c0 2-4.5 2-4.5 0V26h-13v2.5c0 2-4.5 2-4.5 0V26c-1.2 0-2-1-2-2v-8.3C.8 15.7 0 15 0 14V9c0-1 .5-2 2-2V4c0-2 1-4 4-4z" fill="#fff" />
    <path d="M10.5 4h9" stroke="#0077c5" strokeWidth="1.8" strokeLinecap="round" />
    <path d="M6 7.5h8v9H6zM16 7.5h8v9h-8z" fill="#0077c5" />
    <circle cx="6.7" cy="21.3" r="1.8" fill="#0077c5" /><circle cx="23.3" cy="21.3" r="1.8" fill="#0077c5" />
  </svg>
);

const CarIcon = (
  <svg className="mt-px ml-[2px] h-[27px] w-[30px]" viewBox="0 0 30 27">
    <path d="M9 0h12c2 0 3.3.8 4 2.5L28 11c1.5 1 2 2 2 4v10c0 2.5-5 2.5-5 0v-2.5H5V25c0 2.5-5 2.5-5 0V15c0-2 .5-3 2-4L5 2.5C5.7.8 7 0 9 0z" fill="#fff" />
    <path d="M9.5 3.5h11c.8 0 1.2.4 1.5 1l2 5H6l2-5c.3-.6.7-1 1.5-1z" fill="#0077c5" />
    <circle cx="6" cy="15.5" r="2" fill="#0077c5" /><circle cx="24" cy="15.5" r="2" fill="#0077c5" />
  </svg>
);

function Content() {
  return (
    <main className="w-[1069px]">
      <TitleBar />
      <div className="mt-[20px] mb-[29px] flex h-[28px] items-center whitespace-nowrap text-[#333]">
        <strong className="ml-[7px] w-[60px] text-[21px] leading-[28px] font-bold tracking-[0.3px]">주소</strong>
        <span className="w-[466px] text-[18px] leading-[28px] tracking-[0.27px]">(47906)부산광역시 동래구 온천천남로 185</span>
        <strong className="w-[104px] text-[21px] leading-[28px] font-bold tracking-[0.3px]">전화번호</strong>
        <span className="text-[18px] leading-[28px] tracking-[0.27px]">본부 051)759-9300</span>
      </div>
      <MapPanel />
      <h2 className="mt-[45px] h-[42px] border-b-2 border-[#999] pl-[7px] text-[21px] leading-[32px] font-bold tracking-[0.3px] text-[#333]">교통안내</h2>
      <ModeRow icon={BusIcon} label="대중교통 이용시" className="mt-[16px] h-[190px]">
        <Stop className="mt-[21px]">토곡한양아파트 정류소(정류소번호 13077)</Stop>
        <p className="h-[43px] text-[18px] leading-[27px] font-medium tracking-[0.29px] text-[#333]">49, 57, 86, 87, 100</p>
        <Stop>삼성여객(종점)</Stop>
        <p className="text-[18px] leading-[27px] font-medium tracking-[0.29px] text-[#333]">54, 86, 115</p>
      </ModeRow>
      <ModeRow icon={CarIcon} label="자가용 이용시" className="h-[533px]">
        <Stop className="mt-[18px]">시청에서 오시는길</Stop>
        <Bullets items={["시청에서 연산교차로를 지나 안락동방면으로 약 900m 직진 후 하이마트 연산점에서 우회전", "토곡사거리 방면으로 약 1.8KM 직진", "토곡사거리 통과후 약 350M 직진하여 삼성여객차고지 뒤 경동레미콘 옆 부산환경공단 도착"]} />
        <Stop className="mt-[30px]">안락교차로에서 오시는길</Stop>
        <Bullets items={["안락교차로에서 해운대방면 약 1.2KM 직진 후 부산환경공단방면(안락뜨란채아파트앞) 우회전", "약 800M 직진후 토곡사거리에서 부산환경공단방향 좌회전", "삼성여객차고지 뒤 경동레미콘 옆 부산환경공단(약 350M지점) 도착"]} />
        <Stop className="mt-[32px]">도시고속도로, 경부고속도로에서 오시는길</Stop>
        <Bullets items={["원동IC에서 안락교차로 방면으로 약 600M 직진후 부산환경공단방면(안락뜨란채아파트앞) 좌회전", "약 800M 직진후 토곡사거리에서 부산환경공단방향 좌회전", "삼성여객차고지 뒤 경동레미콘 옆 부산환경공단(약 350M지점) 도착"]} />
      </ModeRow>
    </main>
  );
}

function Footer() {
  return (
    <footer className="h-[385px] bg-[#333] pt-[104px] pl-[258px] text-[18px] leading-[28px] font-light tracking-[0.27px] whitespace-nowrap text-[#747474]">
      <div className="flex h-[31px] items-center gap-[6px] pl-[3px]">
        <LeafMark className="size-[31px]" mono />
        <span className="-mt-[4px] text-[21.5px] leading-[31px] font-bold tracking-[-1px] text-[#cfcfcf]">부산환경공단</span>
      </div>
      <p className="mt-[9px]">(47906) 부산광역시 동래구 온천천남로 185(안락동) 부산환경공단</p>
      <p className="mt-[7px] flex pl-px"><span className="w-[235px]">대표전화 : 051-759-9300</span><span>팩스 : 051-760-3219</span></p>
      <p className="mt-[8px] flex pl-px">
        <span className="w-[182px] pt-px">개인정보처리방침</span>
        <span className="w-[295px]">영상정보처리기기 운영,관리 방침</span>
        <span className="w-[116px]">이용약관</span>
        <span className="w-[149px]">전화번호안내</span>
        <span>오시는 길</span>
      </p>
      <p className="mt-[6px] pl-[3px]">ⓒ BUSAN ENVIRONMENTAL CORPORATION. ALL RIGHTS RESERVED.</p>
    </footer>
  );
}

export default function App() {
  return (
    <div className={`relative h-[1854px] w-[1920px] overflow-hidden bg-white ${BASE}`}>
      <Header />
      <div className="flex h-[1421px] gap-[28px] pl-[261px]">
        <Sidebar />
        <Content />
      </div>
      <Footer />
      <div className="absolute top-[68px] right-px flex size-[41px] items-center justify-center rounded-full rounded-bl-none bg-[#0077c5]">
        <svg className="size-[26px]" viewBox="0 0 26 26" fill="none" stroke="#fff" strokeWidth="2.6">
          <path d="M5 10V8.5a8 7 0 0 1 16 0V10" />
          <rect x="3.3" y="10" width="19.5" height="14.5" rx="1.5" />
          <path d="M13 21.5v-2.5a2.3 2.3 0 1 1 .1 0" strokeWidth="1.8" />
        </svg>
      </div>
      <div className="absolute top-[1389px] right-px flex size-[80px] items-center justify-center rounded-full bg-[#0077c5]">
        <svg className="size-[34px]" viewBox="0 0 34 34" fill="none" stroke="#fff" strokeWidth="4.5" strokeLinecap="round" strokeLinejoin="round"><path d="M17 32V3M4 15 17 2.5 30 15" /></svg>
      </div>
    </div>
  );
}
